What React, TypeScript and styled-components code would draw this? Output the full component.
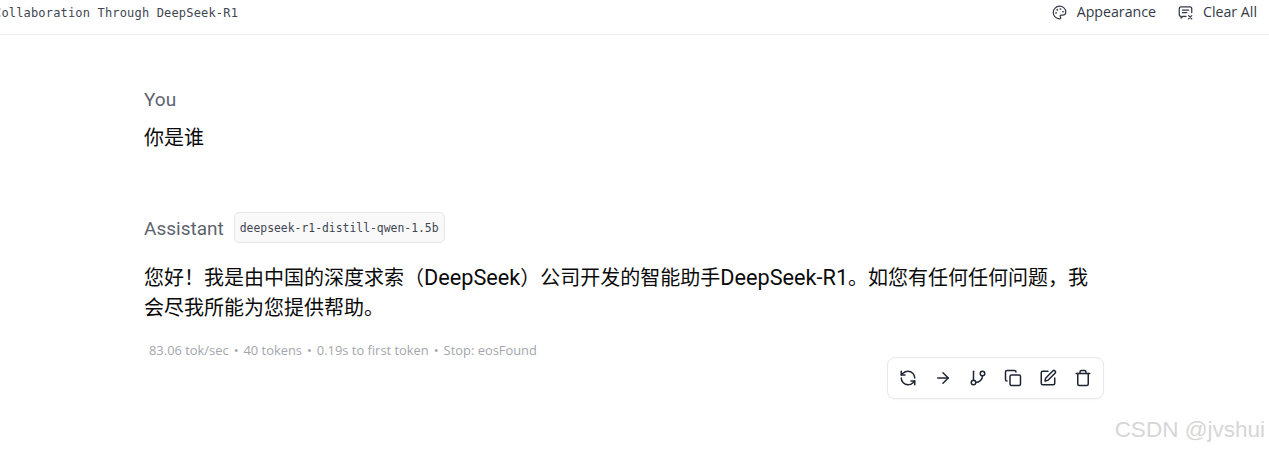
import React from "react";
import styled, { createGlobalStyle } from "styled-components";
import { RefreshCcw, ArrowRight, GitBranch, Copy, SquarePen, Trash, Palette } from "lucide-react";

const Global = createGlobalStyle`
  html, body { margin: 0; padding: 0; background: #fff; height: 100%; overflow: hidden; }
  #root { height: 100%; }
`;

const Page = styled.div`
  position: relative;
  width: 1269px;
  height: 451px;
  overflow: hidden;
  font-family: Roboto, "Noto Sans CJK SC", sans-serif;
  color: #0a0a0a;
`;

const Header = styled.header`
  height: 35px;
  box-sizing: border-box;
  border-bottom: 1px solid #f0f0f1;
  display: flex;
  align-items: flex-start;
  justify-content: space-between;
  padding: 3px 12px 0 0;
  overflow: hidden;
`;

const Title = styled.div`
  margin: 1px 0 0 -6px;
  font-family: "DejaVu Sans Mono", monospace;
  font-size: 12px;
  line-height: 18px;
  letter-spacing: 0.17px;
  color: #3f4652;
  white-space: nowrap;
`;

const Actions = styled.div`
  display: flex;
  align-items: center;
  gap: 22px;
`;

const HeaderAction = styled.div`
  display: flex;
  align-items: center;
  gap: 10px;
  font-family: "Open Sans", sans-serif;
  font-size: 14.2px;
  line-height: 18px;
  color: #333a46;
`;

const Chat = styled.main`
  width: 950px;
  margin-left: 144px;
  padding-top: 53px;
`;

const Role = styled.div`
  display: flex;
  align-items: center;
  gap: 10px;
  font-size: 19px;
  line-height: 24px;
  color: #5c6470;
`;

const Message = styled.p`
  margin: 0;
  font-size: 20px;
  color: #0a0a0a;
`;

const Latin = styled.span`
  font-size: 21.7px;
`;

const UserBody = styled(Message)`
  margin-top: 11px;
  line-height: 30px;
`;

const AssistantBlock = styled.section`
  margin-top: 61px;
`;

const ModelTag = styled.span`
  height: 31px;
  margin-top: -2px;
  box-sizing: border-box;
  display: inline-flex;
  align-items: center;
  padding: 0 5px;
  background: #f9f9fa;
  border: 1px solid #e5e6e8;
  border-radius: 5px;
  font-family: "DejaVu Sans Mono", monospace;
  font-size: 11.4px;
  color: #3f4652;
`;

const AssistantBody = styled(Message)`
  margin-top: 20px;
  line-height: 30px;
`;

const Stats = styled.div`
  margin: 18px 0 0 5px;
  font-family: "Open Sans", sans-serif;
  font-size: 12.9px;
  line-height: 18px;
  color: #a3a6ac;
  display: flex;
  gap: 5px;
`;

const ToolbarRow = styled.div`
  display: flex;
  justify-content: flex-end;
  margin-top: -2px;
  margin-right: -10px;
`;

const Toolbar = styled.div`
  width: 217px;
  height: 42px;
  box-sizing: border-box;
  display: flex;
  align-items: center;
  justify-content: space-between;
  padding: 0 11px;
  border: 1px solid #e8e9eb;
  border-radius: 8px;
  background: #fff;
  box-shadow: 0 1px 2px rgba(0, 0, 0, 0.04);
  color: #1f2633;
`;

const ToolButton = styled.span`
  width: 18px;
  height: 18px;
  display: flex;
`;

const Watermark = styled.div`
  position: absolute;
  right: 4px;
  bottom: 8px;
  font-family: "Liberation Sans", sans-serif;
  font-size: 22.5px;
  color: #d6d6d6;
  white-space: nowrap;
`;

const ClearIcon = () => (
  <svg width="15" height="15" viewBox="0 0 24 24" fill="none" stroke="currentColor" strokeWidth="2" strokeLinecap="round" strokeLinejoin="round">
    <path d="M13 18H8l-3 3v-3a3 3 0 0 1-3-3V6a3 3 0 0 1 3-3h14a3 3 0 0 1 3 3v6" />
    <path d="M7 8h10M7 12h7" />
    <path d="m17 17 5 5M22 17l-5 5" />
  </svg>
);

export default function App() {
  return (
    <Page>
      <Global />
      <Header>
        <Title>Collaboration Through DeepSeek-R1</Title>
        <Actions>
          <HeaderAction>
            <Palette size={15} strokeWidth={2} />
            Appearance
          </HeaderAction>
          <HeaderAction>
            <ClearIcon />
            Clear All
          </HeaderAction>
        </Actions>
      </Header>
      <Chat>
        <Role>You</Role>
        <UserBody>你是谁</UserBody>
        <AssistantBlock>
          <Role>
            Assistant
            <ModelTag>deepseek-r1-distill-qwen-1.5b</ModelTag>
          </Role>
          <AssistantBody>
            您好！我是由中国的深度求索（<Latin>DeepSeek</Latin>）公司开发的智能助手<Latin>DeepSeek-R1</Latin>。如您有任何任何问题，我会尽我所能为您提供帮助。
          </AssistantBody>
          <Stats>
            <span>83.06 tok/sec</span>
            <span>•</span>
            <span>40 tokens</span>
            <span>•</span>
            <span>0.19s to first token</span>
            <span>•</span>
            <span>Stop: eosFound</span>
          </Stats>
          <ToolbarRow>
            <Toolbar>
              <ToolButton><RefreshCcw size={18} /></ToolButton>
              <ToolButton><ArrowRight size={18} /></ToolButton>
              <ToolButton><GitBranch size={18} /></ToolButton>
              <ToolButton><Copy size={18} /></ToolButton>
              <ToolButton><SquarePen size={18} /></ToolButton>
              <ToolButton><Trash size={18} /></ToolButton>
            </Toolbar>
          </ToolbarRow>
        </AssistantBlock>
      </Chat>
      <Watermark>CSDN @jvshui</Watermark>
    </Page>
  );
}
